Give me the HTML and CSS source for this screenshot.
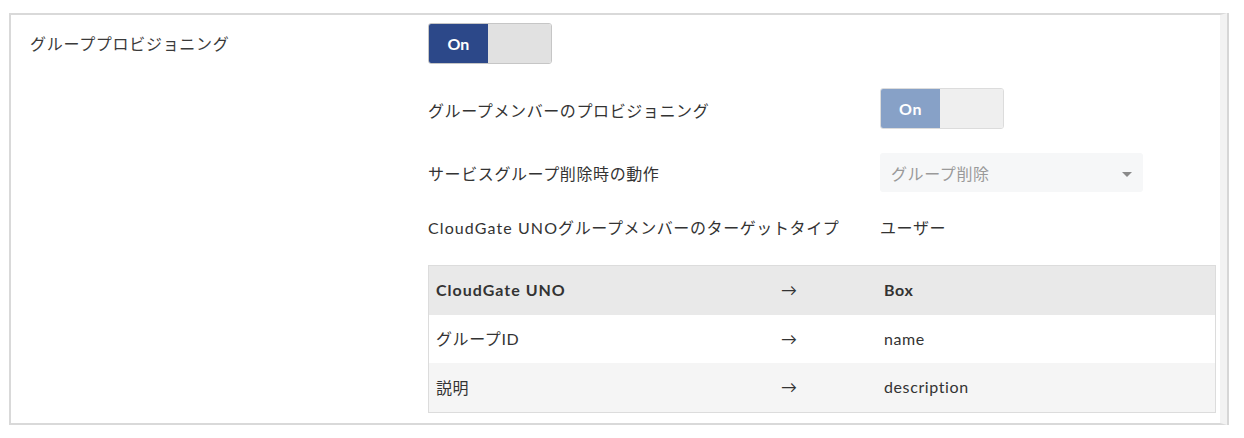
FILE: index.html
```html
<!DOCTYPE html>
<html lang="ja">
<head>
<meta charset="utf-8">
<link rel="stylesheet" href="styles.css">
</head>
<body>
<div class="panel">
  <div class="main-label">グループプロビジョニング</div>
  <div class="main-body">
    <div class="toggle toggle-primary"><span class="toggle-on">On</span><span class="toggle-off"></span></div>
    <div class="sub-grid">
      <div class="sub-label row-a">グループメンバーのプロビジョニング</div>
      <div class="sub-value row-a"><div class="toggle toggle-disabled"><span class="toggle-on">On</span><span class="toggle-off"></span></div></div>
      <div class="sub-label row-b">サービスグループ削除時の動作</div>
      <div class="sub-value row-b"><div class="select"><span>グループ削除</span><span class="caret"></span></div></div>
      <div class="sub-label row-c"><span class="latin">CloudGate UNO</span>グループメンバーのターゲットタイプ</div>
      <div class="sub-value row-c">ユーザー</div>
    </div>
    <div class="map">
      <div class="map-row head"><span class="c1">CloudGate UNO</span><span class="c2">→</span><span class="c3">Box</span></div>
      <div class="map-row odd"><span class="c1">グループID</span><span class="c2">→</span><span class="c3">name</span></div>
      <div class="map-row even"><span class="c1">説明</span><span class="c2">→</span><span class="c3">description</span></div>
    </div>
  </div>
</div>
</body>
</html>
```
FILE: styles.css
```css
* { box-sizing: border-box; }
html, body { margin: 0; padding: 0; background: #fff; }
body {
  font-family: "Lato", "Noto Sans CJK JP", sans-serif;
  font-size: 16px;
  color: #333;
}
.panel {
  margin: 13px 0 0 9px;
  width: 1218px;
  height: 412px;
  border: 2px solid #d9d9d9;
  border-right: 7px solid #f2f2f2;
  box-shadow: 2px 0 0 #d6d6d6;
  display: grid;
  grid-template-columns: 417px 1fr;
  padding: 8px 3px 0 0;
}
.main-label {
  padding-left: 19px;
  height: 41px;
  line-height: 41px;
  color: #3a3a3a;
  letter-spacing: 0.7px;
}
.main-body { display: flex; flex-direction: column; }
.toggle {
  display: flex;
  width: 124px;
  height: 41px;
  border: 1px solid #c6c6c6;
  border-radius: 3px;
  overflow: hidden;
}
.toggle-on {
  width: 59px;
  display: flex;
  align-items: center;
  justify-content: center;
  color: #fff;
  font-weight: 700;
  font-size: 16px;
}
.toggle-off { flex: 1; }
.toggle-primary .toggle-on { background: #2c4889; }
.toggle-primary .toggle-off { background: #e1e1e1; }
.toggle-disabled { border-color: #dcdcdc; }
.toggle-disabled .toggle-on { background: #87a1c7; }
.toggle-disabled .toggle-off { background: #efefef; }
.sub-grid {
  display: grid;
  grid-template-columns: 452px 1fr;
  margin-top: 24px;
  letter-spacing: 0.6px;
}
.latin { letter-spacing: 1.1px; }
.sub-label, .sub-value { display: flex; align-items: center; }
.row-a { height: 41px; }
.row-b { height: 39px; margin-top: 24px; }
.row-c { height: 40px; margin-top: 15px; }
.sub-label.row-a { padding-top: 3px; }
.select {
  width: 263px;
  height: 39px;
  background: #f6f7f8;
  border-radius: 3px;
  display: flex;
  align-items: center;
  justify-content: space-between;
  padding: 0 11px 0 11px;
  color: #9a9a9a;
}
.caret {
  width: 0; height: 0;
  border-left: 5px solid transparent;
  border-right: 5px solid transparent;
  border-top: 5px solid #8a8a8a;
  margin-top: 4px;
}
.map {
  margin-top: 18px;
  width: 788px;
  border: 1px solid #dcdcdc;
  letter-spacing: 0.6px;
}
.map-row {
  display: grid;
  grid-template-columns: 352px 103px 1fr;
  align-items: center;
  height: 48px;
  padding-bottom: 2px;
}
.map .c1 { padding-left: 7px; }
.map .c2 { font-weight: 400; }
.map .head { height: 49px; background: #e9e9e9; font-weight: 700; }
.map .head .c1 { letter-spacing: 1px; }
.map .odd { background: #fff; }
.map .even { background: #f5f5f5; height: 49px; }
```
